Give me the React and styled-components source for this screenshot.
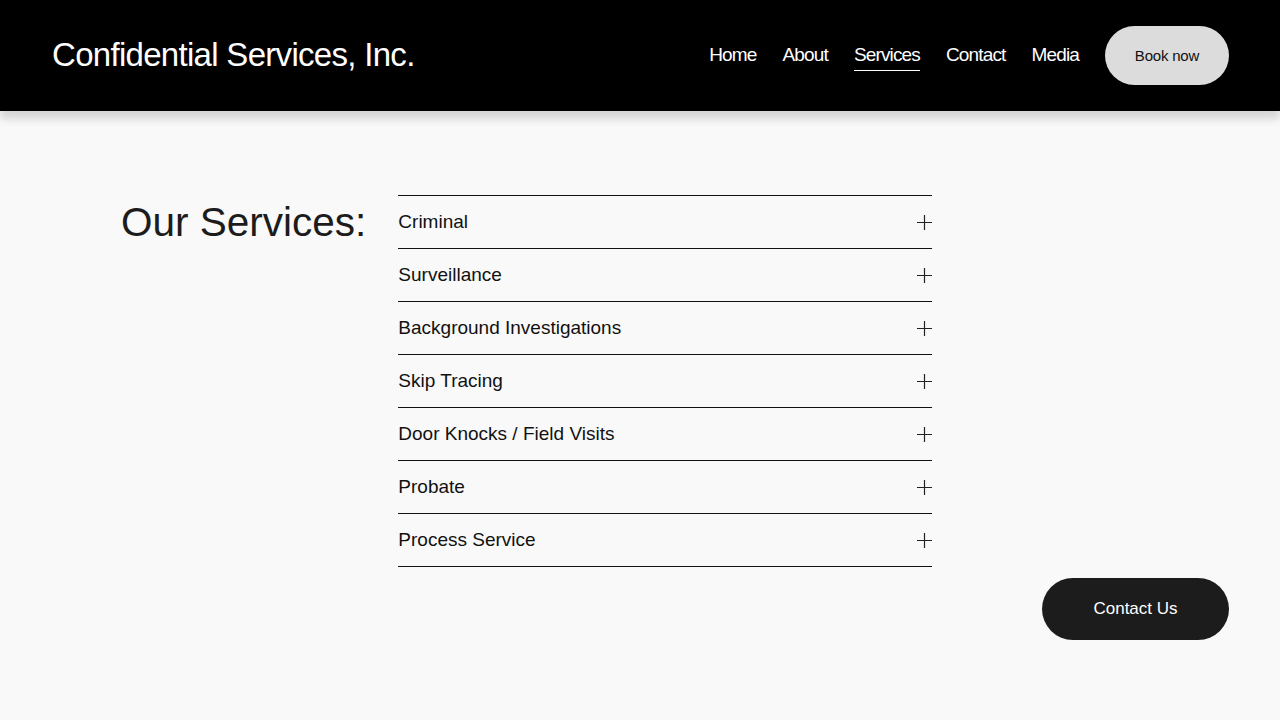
import React from "react";
import styled, { createGlobalStyle } from "styled-components";

const services = [
  "Criminal",
  "Surveillance",
  "Background Investigations",
  "Skip Tracing",
  "Door Knocks / Field Visits",
  "Probate",
  "Process Service",
];

const navLinks = ["Home", "About", "Services", "Contact", "Media"];

const GlobalStyle = createGlobalStyle`
  html, body {
    margin: 0;
    padding: 0;
    background: #f9f9f9;
    font-family: "Liberation Sans", Arial, sans-serif;
  }
  * { box-sizing: border-box; }
`;

const Header = styled.header`
  height: 111px;
  background: #000;
  display: flex;
  align-items: center;
  justify-content: space-between;
  padding: 0 51px 0 52px;
  box-shadow: 0 8px 8px rgba(0, 0, 0, 0.14);
  position: relative;
  z-index: 1;
`;

const Brand = styled.div`
  font-size: 33px;
  letter-spacing: -0.7px;
  color: #fff;
  padding-bottom: 2px;
`;

const Nav = styled.nav`
  display: flex;
  align-items: center;
  gap: 26px;
`;

const NavLink = styled.a`
  font-size: 19px;
  letter-spacing: -0.85px;
  color: #fff;
  text-decoration: none;
  padding: 3px 0 4px;
  border-bottom: 1px solid ${({ $active }) => ($active ? "#fff" : "transparent")};
`;

const BookButton = styled.button`
  width: 124px;
  height: 59px;
  border: none;
  border-radius: 30px;
  background: #dcdcdc;
  color: #111;
  font-family: "Liberation Sans", Arial, sans-serif;
  font-size: 15px;
  letter-spacing: -0.2px;
  cursor: pointer;
`;

const Main = styled.main`
  display: flex;
  align-items: flex-start;
  gap: 32px;
  padding: 84px 0 0 121px;
`;

const Title = styled.h2`
  margin: 0;
  padding-top: 4px;
  font-weight: 400;
  font-size: 40.5px;
  color: #1c1c1c;
  white-space: nowrap;
`;

const List = styled.div`
  width: 534px;
  border-top: 1px solid #111;
`;

const Row = styled.div`
  height: 53px;
  display: flex;
  align-items: center;
  justify-content: space-between;
  border-bottom: 1px solid #111;
  font-size: 19px;
  color: #111;
  padding-bottom: 1px;
`;

const Plus = styled.svg`
  width: 15px;
  height: 15px;
  margin-top: 1px;
`;

const ContactButton = styled.button`
  position: fixed;
  right: 51px;
  top: 578px;
  width: 187px;
  height: 62px;
  border: none;
  border-radius: 31px;
  background: #1c1c1c;
  color: #fff;
  font-family: "Liberation Sans", Arial, sans-serif;
  font-size: 17px;
  cursor: pointer;
`;

const PlusIcon = () => (
  <Plus viewBox="0 0 15 15">
    <path d="M0 7.5H15M7.5 0V15" stroke="#222" strokeWidth="1.2" fill="none" />
  </Plus>
);

export default function App() {
  return (
    <>
      <GlobalStyle />
      <Header>
        <Brand>Confidential Services, Inc.</Brand>
        <Nav>
          {navLinks.map((l) => (
            <NavLink key={l} href="#" $active={l === "Services"}>
              {l}
            </NavLink>
          ))}
          <BookButton>Book now</BookButton>
        </Nav>
      </Header>
      <Main>
        <Title>Our Services:</Title>
        <List>
          {services.map((s) => (
            <Row key={s}>
              <span>{s}</span>
              <PlusIcon />
            </Row>
          ))}
        </List>
      </Main>
      <ContactButton>Contact Us</ContactButton>
    </>
  );
}
